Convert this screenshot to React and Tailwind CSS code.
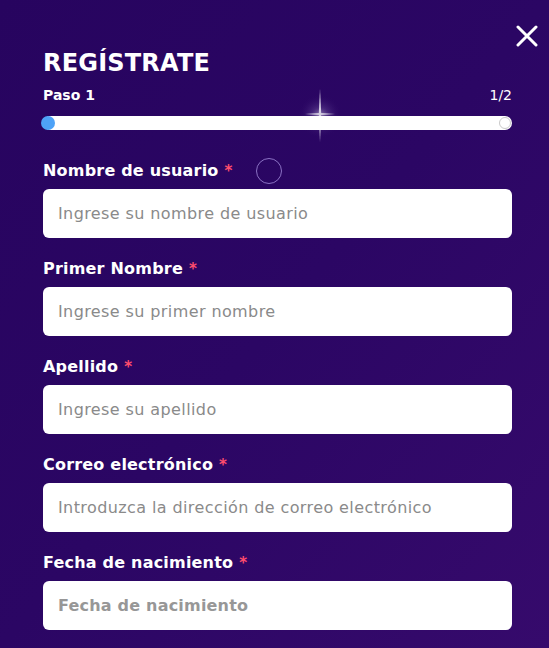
import React from "react";

const fields = [
  { label: "Nombre de usuario", ph: "Ingrese su nombre de usuario", spinner: true },
  { label: "Primer Nombre", ph: "Ingrese su primer nombre" },
  { label: "Apellido", ph: "Ingrese su apellido" },
  { label: "Correo electrónico", ph: "Introduzca la dirección de correo electrónico" },
  { label: "Fecha de nacimiento", ph: "Fecha de nacimiento", boldPh: true },
];

function Sparkle() {
  return (
    <svg className="absolute left-[290px] top-[86px] pointer-events-none" width="60" height="60" viewBox="0 0 60 60">
      <defs>
        <radialGradient id="g" cx="50%" cy="50%" r="50%">
          <stop offset="0%" stopColor="#ffffff" stopOpacity="0.5" />
          <stop offset="40%" stopColor="#b9a8e0" stopOpacity="0.18" />
          <stop offset="100%" stopColor="#2a0562" stopOpacity="0" />
        </radialGradient>
      </defs>
      <circle cx="30" cy="30" r="22" fill="url(#g)" />
      <path d="M30 3 L31.2 27 L30 56 L28.8 27 Z" fill="#d4cee2" />
      <path d="M15 28 L30 27 L45 28 L30 29 Z" fill="#d4cee2" />
    </svg>
  );
}

export default function App() {
  return (
    <div
      className="relative w-[549px] h-[648px] overflow-hidden bg-gradient-to-br from-[#27045f] via-[#2b0664] to-[#360a6c]"
      style={{ fontFamily: '"DejaVu Sans", "Open Sans", sans-serif' }}
    >
      <button className="absolute right-[10px] top-[24px] w-[24px] h-[24px] flex items-center justify-center">
        <svg width="22" height="22" viewBox="0 0 22 22">
          <path d="M2 2 L20 20 M20 2 L2 20" stroke="#ffffff" strokeWidth="3" strokeLinecap="round" />
        </svg>
      </button>
      <Sparkle />
      <div className="pl-[43px] pr-[37px] pt-[48px] flex flex-col">
        <h1 className="text-white text-[24px] leading-[30px] font-bold tracking-[0.2px]">REGÍSTRATE</h1>
        <div className="flex justify-between items-center mt-[7px] h-[20px]">
          <span className="text-white text-[14px] font-bold">Paso 1</span>
          <span className="text-white text-[14px]">1/2</span>
        </div>
        <div className="relative mt-[11px] h-[14px] rounded-full bg-white">
          <div className="absolute left-[-2px] top-0 w-[14px] h-[14px] rounded-full bg-[#4ea2f7]" />
          <div className="absolute right-[1px] top-[1px] w-[12px] h-[12px] rounded-full border border-[#c9c9c9]" />
        </div>
        <div className="mt-[29px] flex flex-col">
          {fields.map((f, i) => (
            <div key={i} className="flex flex-col mb-[19px]">
              <div className="flex items-center h-[24px]">
                <span className="text-white text-[16px] font-bold tracking-[0.2px]">{f.label}</span>
                <span className="text-[#ff4d6d] text-[15px] font-bold ml-[6px]">*</span>
                {f.spinner && (
                  <span className="ml-[24px] w-[26px] h-[26px] rounded-full border-[1.5px] border-[#8b72c4]" />
                )}
              </div>
              <div className="mt-[6px] h-[49px] rounded-[6px] bg-white flex items-center px-[15px]">
                <span className={f.boldPh ? "text-[#979797] text-[16px] font-bold tracking-[0.2px]" : "text-[#8a8a8a] text-[16px] tracking-[0.4px]"}>{f.ph}</span>
              </div>
            </div>
          ))}
        </div>
      </div>
    </div>
  );
}
